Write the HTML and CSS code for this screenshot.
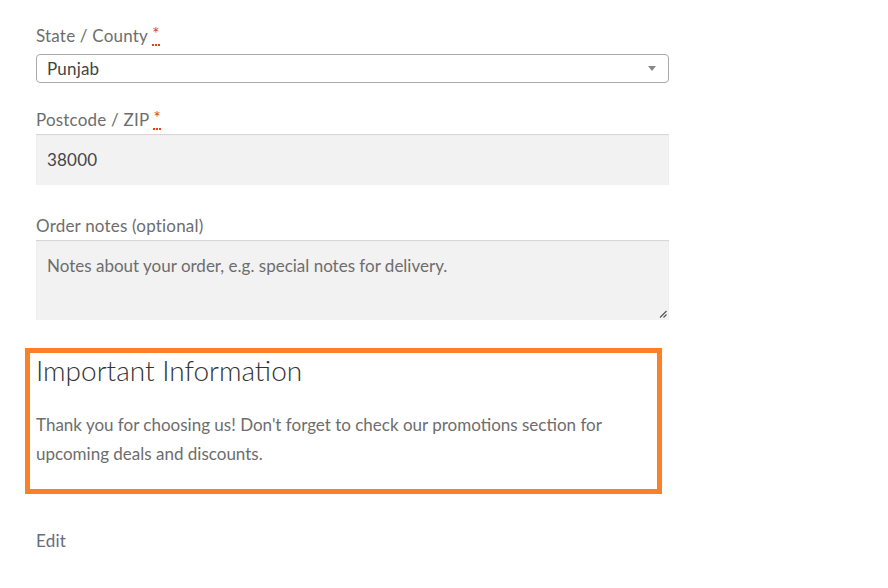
FILE: index.html
```html
<!DOCTYPE html>
<html>
<head>
<meta charset="utf-8">
<link rel="stylesheet" href="styles.css">
</head>
<body>
<div class="form">
  <div class="field">
    <label class="label">State / County <abbr class="req">*</abbr></label>
    <div class="select">
      <span class="select-value">Punjab</span>
      <span class="select-arrow"></span>
    </div>
  </div>
  <div class="field field-gap">
    <label class="label">Postcode / ZIP <abbr class="req">*</abbr></label>
    <div class="input">38000</div>
  </div>
  <div class="field field-gap">
    <label class="label">Order notes (optional)</label>
    <div class="textarea">
      <span class="placeholder">Notes about your order, e.g. special notes for delivery.</span>
      <svg class="grip" width="8" height="8" viewBox="0 0 8 8"><path d="M7.5 1 L1 7.5 M7.5 4.5 L4.5 7.5" stroke="#555" stroke-width="1.2" fill="none"/></svg>
    </div>
  </div>
  <div class="notice">
    <h2 class="notice-title">Important Information</h2>
    <p class="notice-text">Thank you for choosing us! Don't forget to check our promotions section for upcoming deals and discounts.</p>
  </div>
  <a class="edit">Edit</a>
</div>
</body>
</html>
```

FILE: styles.css
```css
html, body {
  margin: 0;
  padding: 0;
  background: #ffffff;
}
body {
  font-family: "Lato", "Open Sans", sans-serif;
  font-size: 17px;
  letter-spacing: 0.2px;
  color: #6d6d6d;
}
.form {
  width: 633px;
  padding: 23px 0 0 36px;
  display: flex;
  flex-direction: column;
}
.field {
  display: flex;
  flex-direction: column;
}
.field-gap {
  margin-top: 24px;
}
.field-gap + .field-gap {
  margin-top: 28px;
}
.label {
  line-height: 26px;
  height: 26px;
  color: #6d6d6d;
}
.req {
  color: #e2401c;
  text-decoration: none;
  border-bottom: 2px dotted #e2401c;
  line-height: 1;
  position: relative;
  top: -2px;
}
.select {
  margin-top: 5px;
  height: 29px;
  box-sizing: border-box;
  border: 1px solid #aaaaaa;
  border-radius: 4px;
  background: #ffffff;
  display: flex;
  align-items: center;
  justify-content: space-between;
  padding: 0 12px 0 10px;
}
.select-value {
  color: #444444;
  line-height: 27px;
}
.select-arrow {
  width: 0;
  height: 0;
  border-left: 4px solid transparent;
  border-right: 4px solid transparent;
  border-top: 5px solid #888888;
}
.input {
  margin-top: 1px;
  height: 51px;
  box-sizing: border-box;
  background: #f2f2f2;
  box-shadow: inset 0 1px 1px rgba(0,0,0,0.125);
  color: #43454b;
  padding: 0 11px;
  display: flex;
  align-items: center;
}
.textarea {
  margin-top: 1px;
  height: 80px;
  box-sizing: border-box;
  background: #f2f2f2;
  box-shadow: inset 0 1px 1px rgba(0,0,0,0.125);
  padding: 13px 11px 0;
  position: relative;
}
.placeholder {
  color: #6d6d6d;
  letter-spacing: 0;
  line-height: 26px;
}
.grip {
  position: absolute;
  right: 2px;
  bottom: 2px;
}
.notice {
  margin: 28px 0 0 -11px;
  width: 637px;
  height: 146px;
  box-sizing: border-box;
  border: 5px solid #ff7f27;
  padding: 0 0 0 6px;
}
.notice-title {
  margin: -1px 0 0;
  font-size: 28px;
  font-weight: 300;
  letter-spacing: 0;
  line-height: 36px;
  color: #333333;
}
.notice-text {
  margin: 22px 0 0;
  max-width: 590px;
  letter-spacing: 0;
  line-height: 29px;
  color: #6d6d6d;
}
.edit {
  margin-top: 34px;
  line-height: 26px;
  color: #686a80;
  align-self: flex-start;
}
```
